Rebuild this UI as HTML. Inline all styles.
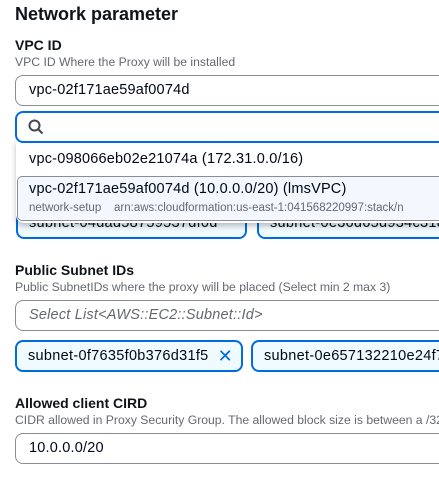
<!DOCTYPE html>
<html><head><style>
body{margin:0;width:439px;height:482px;overflow:hidden;background:#fff;font-family:"Liberation Sans",sans-serif;color:#000716;position:relative}
.a{position:absolute;white-space:nowrap}
.h{font-size:18px;font-weight:bold;color:#0f141a}
.l{font-size:14px;font-weight:bold;color:#0f141a}
.d{font-size:12.2px;color:#656871}
.in{position:absolute;left:15px;width:440px;height:31px;border:1px solid #8c8c94;border-radius:8px;box-sizing:border-box;font-size:14.5px;letter-spacing:0.2px;line-height:29px;padding-left:13px}
.tok{position:absolute;height:32px;border:2px solid #006ce0;border-radius:8px;background:#f0fbff;box-sizing:border-box;font-size:14.5px;letter-spacing:0.3px;line-height:28px;padding-left:11px}
.x{position:absolute;right:8px;top:0;color:#006ce0;font-size:18px}
</style></head><body>
<div class="a h" style="left:15px;top:4px">Network parameter</div>
<div class="a l" style="left:15px;top:37px">VPC ID</div>
<div class="a d" style="left:15px;top:55px">VPC ID Where the Proxy will be installed</div>
<div class="in" style="top:75px">vpc-02f171ae59af0074d</div>

<div class="tok" style="left:16px;top:207px;width:231px">subnet-04dad58759537df0d</div>
<div class="tok" style="left:257px;top:207px;width:200px">subnet-0e36d65d934c318</div>

<div style="position:absolute;left:16px;top:140px;width:440px;height:83px;background:#fff;box-shadow:0 3px 6px rgba(0,0,0,.25);border-radius:0 0 8px 8px"></div>
<div style="position:absolute;left:15px;top:111px;width:440px;height:32px;border:2px solid #006ce0;border-radius:8px;box-sizing:border-box;background:#fff">
<svg style="position:absolute;left:11px;top:6px" width="16" height="16" viewBox="0 0 16 16"><circle cx="6.5" cy="6.5" r="5" fill="none" stroke="#424650" stroke-width="2"/><path d="M10 10l4.5 4.5" stroke="#424650" stroke-width="2"/></svg></div>
<div class="a" style="left:29px;top:151px;font-size:14.5px;letter-spacing:0.2px">vpc-098066eb02e21074a (172.31.0.0/16)</div>
<div style="position:absolute;left:17px;top:176px;width:440px;height:45px;border:1.5px solid #8c8c94;border-radius:5px;background:#f2f8fd;box-sizing:border-box"></div>
<div class="a" style="left:29px;top:181px;font-size:14.5px;letter-spacing:0.2px">vpc-02f171ae59af0074d (10.0.0.0/20) (lmsVPC)</div>
<div class="a d" style="left:29px;top:202px;font-size:11.5px">network-setup&nbsp;&nbsp;&nbsp;&nbsp;arn:aws:cloudformation:us-east-1:041568220997:stack/n</div>

<div class="a l" style="left:15px;top:262px">Public Subnet IDs</div>
<div class="a d" style="left:15px;top:280px">Public SubnetIDs where the proxy will be placed (Select min 2 max 3)</div>
<div class="in" style="top:300px;font-style:italic;color:#656871">Select List&lt;AWS::EC2::Subnet::Id&gt;</div>
<div class="tok" style="left:15px;top:340px;width:228px">subnet-0f7635f0b376d31f5<span class="x">✕</span></div>
<div class="tok" style="left:251px;top:340px;width:210px">subnet-0e657132210e24f7</div>

<div class="a l" style="left:15px;top:395px">Allowed client CIRD</div>
<div class="a d" style="left:15px;top:413px">CIDR allowed in Proxy Security Group. The allowed block size is between a /32</div>
<div class="in" style="top:433px">10.0.0.0/20</div>
</body></html>
